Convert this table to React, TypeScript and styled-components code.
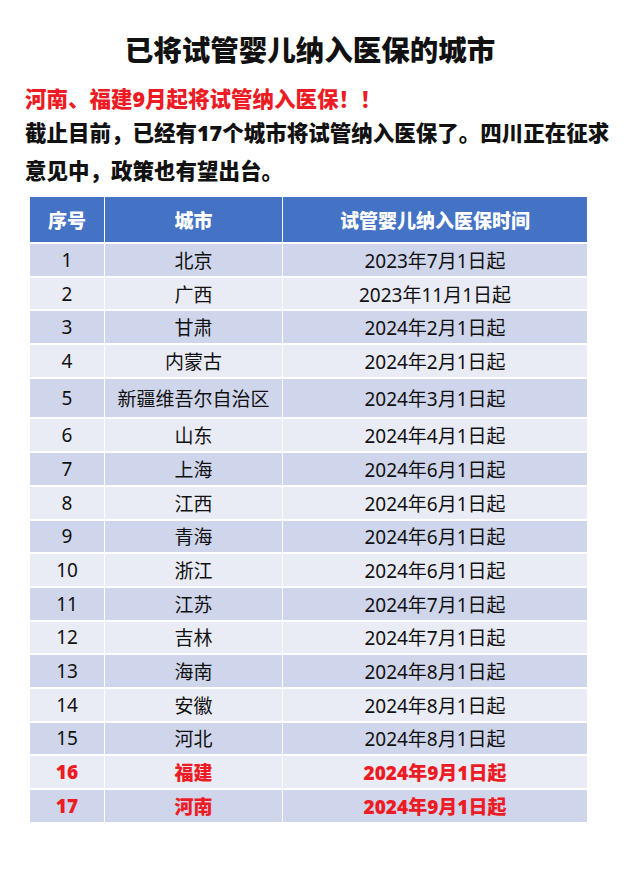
import React from "react";
import styled, { createGlobalStyle } from "styled-components";

const GlobalStyle = createGlobalStyle`
  html, body {
    margin: 0;
    padding: 0;
    background: #ffffff;
  }
  body {
    font-family: "Noto Sans", "Noto Sans CJK SC", sans-serif;
    color: #111111;
  }
`;

const Page = styled.div`
  width: 630px;
  min-height: 872px;
  box-sizing: border-box;
  padding: 32px 0 0 25px;
  display: flex;
  flex-direction: column;
  align-items: flex-start;
`;

const Title = styled.h1`
  margin: 0;
  width: 570px;
  text-align: center;
  font-size: 28.5px;
  line-height: 36px;
  font-weight: 900;
  color: #111111;
`;

const Alert = styled.p`
  margin: 16px 0 0 0;
  font-size: 21.5px;
  line-height: 30px;
  font-weight: 900;
  color: #ec1b24;
  white-space: nowrap;
`;

const Intro = styled.p`
  margin: 0;
  font-size: 21.5px;
  line-height: 38px;
  font-weight: 900;
  color: #111111;
  white-space: nowrap;
`;

const Table = styled.div`
  margin: 7px 0 0 5px;
  display: grid;
  grid-template-columns: 74px 177px 304px;
  column-gap: 1px;
  row-gap: 2px;
  background: #ffffff;
`;

const HeadCell = styled.div`
  height: 45px;
  background: #4472c4;
  color: #ffffff;
  font-size: 19px;
  font-weight: 900;
  display: flex;
  align-items: center;
  justify-content: center;
`;

const Cell = styled.div<{ $odd: boolean; $tall: boolean; $hot: boolean }>`
  height: ${(p) => (p.$tall ? "38.7px" : "31.7px")};
  background: ${(p) => (p.$odd ? "#cfd5ea" : "#e9ebf5")};
  color: ${(p) => (p.$hot ? "#ec1b24" : "#111111")};
  font-weight: ${(p) => (p.$hot ? 900 : 400)};
  font-size: 19px;
  display: flex;
  align-items: center;
  justify-content: center;
  white-space: nowrap;
`;

const rows: [string, string, boolean?][] = [
  ["北京", "2023年7月1日起"],
  ["广西", "2023年11月1日起"],
  ["甘肃", "2024年2月1日起"],
  ["内蒙古", "2024年2月1日起"],
  ["新疆维吾尔自治区", "2024年3月1日起"],
  ["山东", "2024年4月1日起"],
  ["上海", "2024年6月1日起"],
  ["江西", "2024年6月1日起"],
  ["青海", "2024年6月1日起"],
  ["浙江", "2024年6月1日起"],
  ["江苏", "2024年7月1日起"],
  ["吉林", "2024年7月1日起"],
  ["海南", "2024年8月1日起"],
  ["安徽", "2024年8月1日起"],
  ["河北", "2024年8月1日起"],
  ["福建", "2024年9月1日起", true],
  ["河南", "2024年9月1日起", true],
];

export default function App() {
  return (
    <>
      <GlobalStyle />
      <Page>
        <Title>已将试管婴儿纳入医保的城市</Title>
        <Alert>河南、福建9月起将试管纳入医保！！</Alert>
        <Intro>
          截止目前，已经有17个城市将试管纳入医保了。四川正在征求
          <br />
          意见中，政策也有望出台。
        </Intro>
        <Table>
          <HeadCell>序号</HeadCell>
          <HeadCell>城市</HeadCell>
          <HeadCell>试管婴儿纳入医保时间</HeadCell>
          {rows.map(([city, date, hot], i) => {
            const odd = i % 2 === 0;
            const tall = i === 4;
            const h = !!hot;
            return (
              <React.Fragment key={i}>
                <Cell $odd={odd} $tall={tall} $hot={h}>{i + 1}</Cell>
                <Cell $odd={odd} $tall={tall} $hot={h}>{city}</Cell>
                <Cell $odd={odd} $tall={tall} $hot={h}>{date}</Cell>
              </React.Fragment>
            );
          })}
        </Table>
      </Page>
    </>
  );
}
